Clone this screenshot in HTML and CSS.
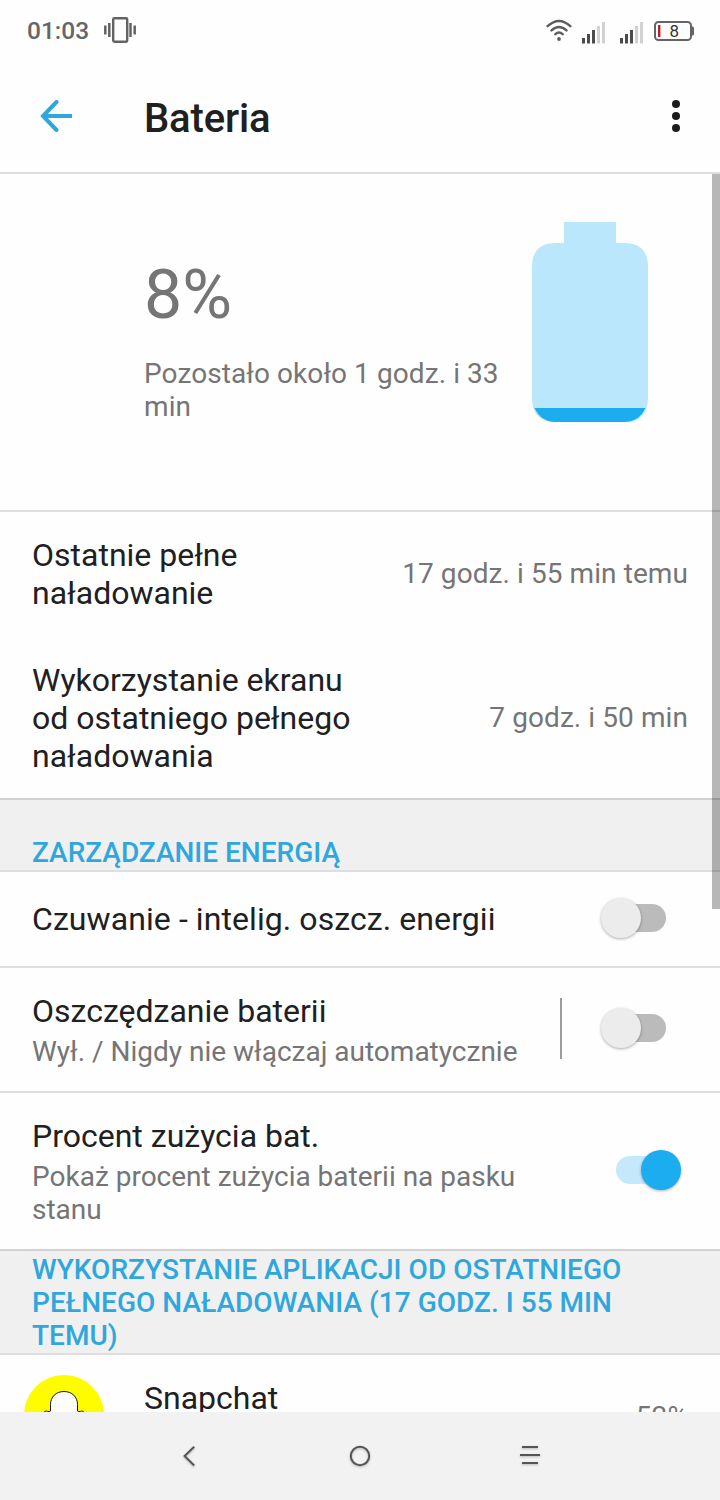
FILE: index.html
```html
<!DOCTYPE html>
<html lang="pl">
<head>
<meta charset="utf-8">
<title>Bateria</title>
<link rel="stylesheet" href="styles.css">
</head>
<body>
<div class="screen">
  <header class="status">
    <span class="clock">01:03</span>
    <svg class="vibrate" width="34" height="28" viewBox="0 0 34 28" fill="none" stroke="#636363">
      <rect x="9.2" y="2.2" width="14" height="23.6" rx="1.2" stroke-width="2.4"/>
      <path d="M1.3 9.5v9M5.3 7v14M26.500 7v14M30.700 9.500v9" stroke-width="2.500"/>
    </svg>
    <div class="status-right">
      <svg class="wifi" width="26" height="24" viewBox="0 0 26 24" fill="none" stroke="#5c5c5c" stroke-width="2.4" stroke-linecap="round">
        <path d="M1.600 7.200Q13 -3.400 24.400 7.200M5.500 11.400Q13 4.600 20.500 11.400M9.400 15.200Q13 12 16.600 15.200"/>
        <circle cx="13" cy="20" r="1.900" fill="#5c5c5c" stroke="none"/>
      </svg>
      <svg class="signal" width="24" height="24" viewBox="0 0 24 24" stroke-width="3">
        <path d="M1.500 17v5.500M6.500 13v9.500M11.500 9v13.500" stroke="#4c4c4c"/>
        <path d="M16.500 5v17.500M21.500 1v21.500" stroke="#d2d2d2"/>
      </svg>
      <svg class="signal second" width="24" height="24" viewBox="0 0 24 24" stroke-width="3">
        <path d="M1.500 17v5.500M6.500 13v9.500M11.500 9v13.500" stroke="#4c4c4c"/>
        <path d="M16.500 5v17.500M21.500 1v21.500" stroke="#d2d2d2"/>
      </svg>
      <svg class="level" width="40" height="20" viewBox="0 0 40 20">
        <rect x="1" y="1" width="36" height="18" rx="3.500" fill="none" stroke="#646464" stroke-width="2"/>
        <path d="M37 5.500h1.500q1.500 0 1.500 1.500v6q0 1.500-1.500 1.500H37z" fill="#646464"/>
        <path d="M5.200 4v12" stroke="#b5202b" stroke-width="2.400"/>
        <text x="20.300" y="16" class="level-text">8</text>
      </svg>
    </div>
  </header>

  <div class="appbar">
    <svg class="back" width="34" height="32" viewBox="0 0 34 32" fill="none" stroke="#2fa7dc" stroke-width="4">
      <path d="M33 16H5"/>
      <path d="M17.500 2L4 16l13.500 14" stroke-linecap="round"/>
    </svg>
    <h1>Bateria</h1>
    <svg class="more" width="8" height="32" viewBox="0 0 8 32" fill="#1b1b1b">
      <circle cx="4" cy="4" r="4"/><circle cx="4" cy="16" r="4"/><circle cx="4" cy="28" r="4"/>
    </svg>
  </div>

  <main class="content">
    <section class="summary">
      <div class="summary-text">
        <div class="percent">8%</div>
        <p class="remaining">Pozostało około 1 godz. i 33 min</p>
      </div>
      <svg class="battery" width="116" height="200" viewBox="0 0 116 200">
        <path d="M32 0h52v21h8q24 0 24 24v131q0 24-24 24H24q-24 0-24-24V45Q0 21 24 21h8z" fill="#bbe7fc"/>
        <path d="M2.500 186h111Q107 200 92 200H24Q9 200 2.500 186z" fill="#1cacf0"/>
      </svg>
    </section>

    <section class="stats">
      <div class="stat">
        <div class="label">Ostatnie pełne naładowanie</div>
        <div class="value">17 godz. i 55 min temu</div>
      </div>
      <div class="stat">
        <div class="label">Wykorzystanie ekranu od ostatniego pełnego naładowania</div>
        <div class="value">7 godz. i 50 min</div>
      </div>
    </section>

    <h2 class="section energy">ZARZĄDZANIE ENERGIĄ</h2>

    <div class="row standby">
      <div class="label">Czuwanie - intelig. oszcz. energii</div>
      <span class="switch"></span>
    </div>
    <div class="row saver">
      <div class="text">
        <div class="label">Oszczędzanie baterii</div>
        <div class="sub">Wył. / Nigdy nie włączaj automatycznie</div>
      </div>
      <span class="separator"></span>
      <span class="switch"></span>
    </div>
    <div class="row usage">
      <div class="text">
        <div class="label">Procent zużycia bat.</div>
        <div class="sub">Pokaż procent zużycia baterii na pasku stanu</div>
      </div>
      <span class="switch on"></span>
    </div>

    <h2 class="section apps">WYKORZYSTANIE APLIKACJI OD OSTATNIEGO PEŁNEGO NAŁADOWANIA (17 GODZ. I 55 MIN TEMU)</h2>

    <div class="app">
      <svg class="app-icon" width="80" height="80" viewBox="0 0 80 80">
        <circle cx="40" cy="40" r="40" fill="#fffc00"/>
        <path d="M40 16.500c-8 0-13.500 5.500-13.500 13v6.500c-2 1.500-3.500-.5-5.500.3-2.500 1.300 0 3.700 3.500 5.200 2.500 1.100 0 8.500-8 10.500-1 3 3.500 3.500 6.500 4 1 2 .5 3 2 3 2-.3 5-1 8 1 4.500 3.500 9.500 3.500 14 0 3-2 6-1.300 8-1 1.500 0 1-1 2-3 3-.5 7.500-1 6.500-4-8-2-10.500-9.400-8-10.500 3.500-1.500 6-3.900 3.500-5.200-2-.8-3.500 1.200-5.500-.3v-6.500c0-7.500-5.500-13-13.500-13z" fill="#fff" stroke="#171700" stroke-width="1"/>
      </svg>
      <div class="label">Snapchat</div>
      <div class="value">52%</div>
    </div>
    <span class="scrollbar"></span>
  </main>

  <nav class="navbar">
    <svg width="24" height="24" viewBox="0 0 24 24"><path d="M16.200 2.800L6.600 12l9.600 9.500"/></svg>
    <svg width="24" height="24" viewBox="0 0 24 24"><circle cx="12" cy="12" r="9.200"/></svg>
    <svg width="24" height="24" viewBox="0 0 24 24"><path d="M4 3h16M2 11h20M4 19h16"/></svg>
  </nav>
</div>
</body>
</html>
```
FILE: styles.css
```css
* { box-sizing: border-box; margin: 0; padding: 0; }
body { width: 720px; background: #fff; font-family: Roboto, sans-serif; }
svg { display: block; flex-shrink: 0; }

.screen {
  display: flex;
  flex-direction: column;
  height: 1500px;
  overflow: hidden;
  background: #fefefe;
}

.status {
  display: flex;
  align-items: flex-start;
  height: 62px;
  padding: 16px 26px 0 27px;
}
.clock { width: 77px; font-size: 24.500px; line-height: 30px; font-weight: 500; color: #666; }
.status-right { display: flex; margin-left: auto; }
.wifi { margin: 3px 10px 0 0; }
.signal { margin-top: 5px; }
.signal.second { margin: 5px 10px 0 14px; }
.level { margin-top: 5px; }
.level-text { font: 400 17px Roboto, sans-serif; fill: #333; text-anchor: middle; }

.appbar {
  display: flex;
  align-items: flex-start;
  height: 112px;
  padding: 38px 40px 0 39px;
  border-bottom: 2px solid #dedede;
}
.back { width: 34px; margin-right: 71px; }
h1 { margin-top: -5px; font-size: 40px; line-height: 47px; font-weight: 500; letter-spacing: -0.15px; color: #202020; }
.more { margin-left: auto; }

.content { position: relative; flex: 1; min-height: 0; overflow: hidden; }
.scrollbar {
  position: absolute;
  top: 0;
  right: 0;
  width: 8px;
  height: 735px;
  background: rgba(0, 0, 0, 0.28);
}

.label { font-size: 32px; line-height: 38px; color: #202020; }
.sub, .value, .remaining { font-size: 28px; line-height: 33px; color: #757575; }
.value, .remaining { letter-spacing: 0.08px; }

.summary {
  display: flex;
  height: 338px;
  padding: 48px 72px 0 144px;
  border-bottom: 2px solid #dedede;
}
.summary-text { width: 388px; padding-top: 33px; }
.percent { font-size: 68px; line-height: 80px; color: #757575; }
.remaining { margin-top: 22px; width: 370px; }

.stats {
  display: flex;
  flex-direction: column;
  gap: 49px;
  height: 288px;
  padding: 24px 32px 0;
  border-bottom: 2px solid #d2d2d2;
}
.stat { display: flex; align-items: center; justify-content: space-between; }
.stat .label { width: 330px; }
.stat:first-child .label { width: 260px; }
.stat .value { margin-top: -1px; }

.section {
  background: #f0f0f0;
  border-bottom: 2px solid #dedede;
  font-size: 28px;
  line-height: 33px;
  font-weight: 500;
  color: #2fa7dc;
}
.energy { height: 72px; padding: 36px 32px 0; }
.apps { height: 104px; padding: 2px 90px 0 32px; letter-spacing: 0.03px; }

.row {
  display: flex;
  align-items: center;
  padding: 0 32px;
  border-bottom: 2px solid #dedede;
}
.row .label { flex-shrink: 0; }
.standby { height: 96px; }
.standby .label { letter-spacing: 0.08px; }
.saver { height: 125px; }
.usage { height: 158px; border-bottom-color: #d2d2d2; }
.text { width: 520px; padding-top: 1px; }
.text .sub { margin-top: 5px; }
.separator { width: 2px; height: 61px; margin: 0 0 2px 8px; background: #9c9c9c; }

.switch {
  position: relative;
  width: 50px;
  height: 28px;
  margin: 0 22px 2px auto;
  border-radius: 14px;
  background: #bbb;
}
.saver .switch { margin-bottom: 3px; }
.switch::after {
  content: "";
  position: absolute;
  top: -6px;
  left: -15px;
  width: 40px;
  height: 40px;
  border-radius: 50%;
  background: #ececec;
  box-shadow: 0 1px 3px rgba(0, 0, 0, 0.32);
}
.switch.on { background: #c5e9fb; }
.switch.on::after { left: 25px; background: #1cacf0; }

.app { display: flex; align-items: flex-start; padding: 20px 32px 0 24px; }
.app .label { margin: 4px 0 0 40px; }
.app .value { margin: 25px 0 0 auto; }

.navbar {
  display: flex;
  justify-content: center;
  gap: 146px;
  height: 88px;
  padding-top: 32px;
  background: #f2f2f2;
}
.navbar svg { fill: none; stroke: #555; stroke-width: 2; filter: drop-shadow(0 1px 1px rgba(0, 0, 0, 0.25)); }
```
